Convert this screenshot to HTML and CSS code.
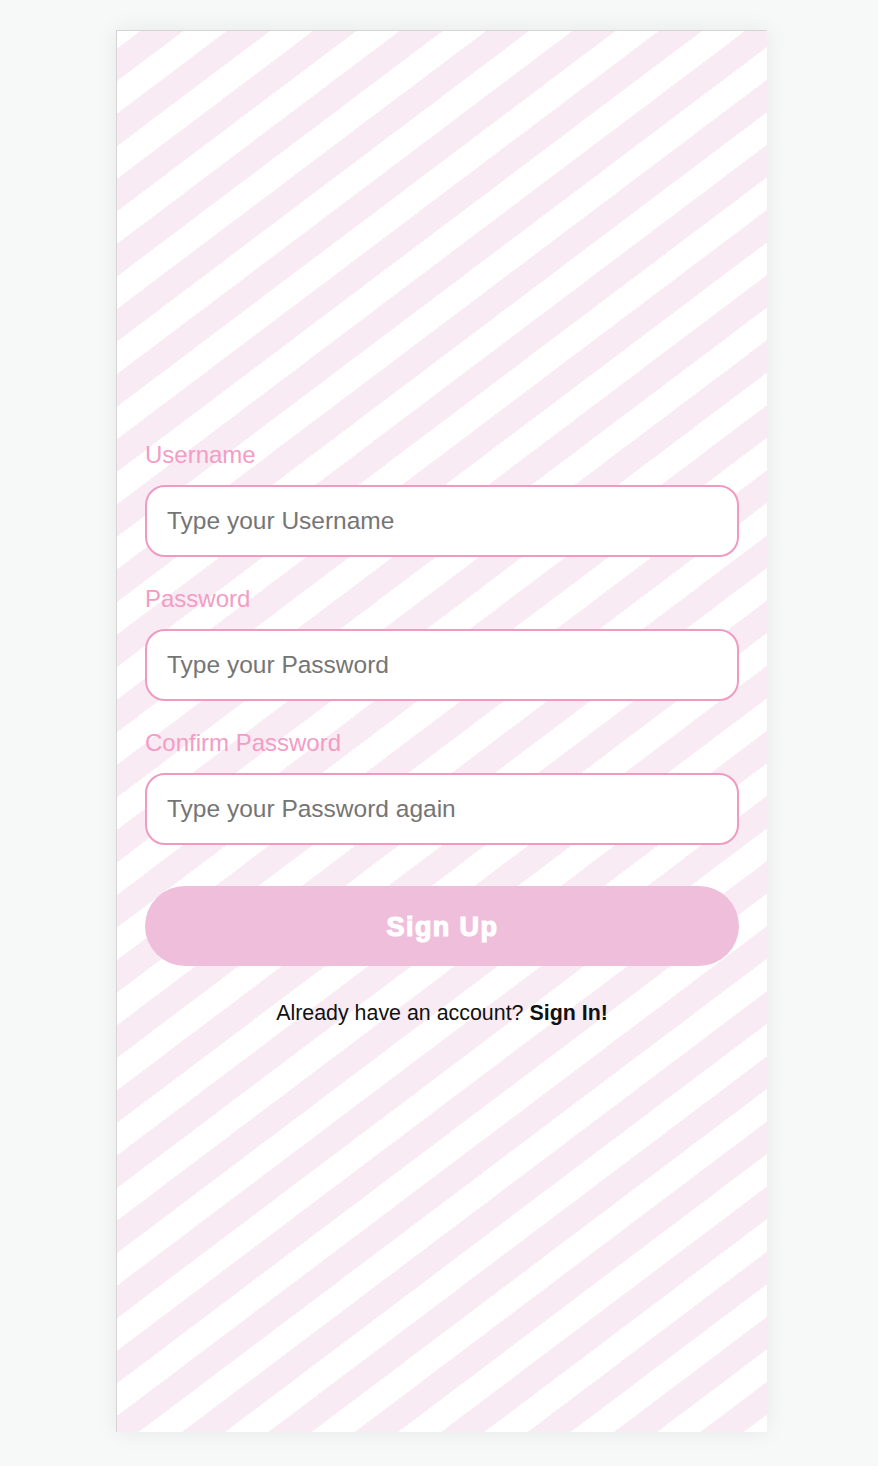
FILE: index.html
```html
<!DOCTYPE html>
<html lang="en">
<head>
<meta charset="utf-8">
<title>Sign Up</title>
<link rel="stylesheet" href="styles.css">
</head>
<body>
<div class="page">
  <div class="card">
    <form class="form">
      <label class="label" for="username">Username</label>
      <input class="field" id="username" type="text" placeholder="Type your Username">
      <label class="label" for="password">Password</label>
      <input class="field" id="password" type="password" placeholder="Type your Password">
      <label class="label" for="confirm">Confirm Password</label>
      <input class="field field-last" id="confirm" type="password" placeholder="Type your Password again">
      <button class="submit" type="button">Sign Up</button>
      <p class="footer">Already have an account? <a class="signin" href="#">Sign In!</a></p>
    </form>
  </div>
</div>
</body>
</html>
```

FILE: styles.css
```css
html, body {
  margin: 0;
  padding: 0;
  background: #f7f8f8;
}

.page {
  padding: 30px 0 34px 116px;
}

.card {
  box-sizing: border-box;
  width: 651px;
  height: 1402px;
  border-top: 1px solid #d4d4d4;
  border-left: 1px solid #d4d4d4;
  background-color: #ffffff;
  background-image: repeating-linear-gradient(143deg,
    #ffffff 0px, #ffffff 14px,
    #f8ebf4 14px, #f8ebf4 40px,
    #ffffff 40px, #ffffff 52px);
  box-shadow: 0 0 22px rgba(0, 0, 0, 0.07);
  display: flex;
  flex-direction: column;
  justify-content: center;
  padding: 2px 28px 0 28px;
}

.form {
  display: flex;
  flex-direction: column;
  font-family: "Liberation Sans", Arial, sans-serif;
}

.label {
  color: #f49cc5;
  font-size: 24px;
  line-height: 28px;
  margin-bottom: 16px;
}

.field {
  box-sizing: border-box;
  height: 72px;
  width: 100%;
  border: 2px solid #f09ac3;
  border-radius: 20px;
  background: #ffffff;
  padding: 0 20px;
  font-family: "Liberation Sans", Arial, sans-serif;
  font-size: 24.5px;
  color: #333;
  margin: 0 0 28px 0;
  outline: none;
}

.field::placeholder {
  color: #757575;
  opacity: 1;
}

.field-last {
  margin-bottom: 41px;
}

.submit {
  height: 80px;
  width: 100%;
  border: none;
  border-radius: 40px;
  background: #efbedb;
  color: #ffffff;
  font-family: "Liberation Sans", Arial, sans-serif;
  font-weight: bold;
  font-size: 27px;
  letter-spacing: 1.4px;
  -webkit-text-stroke: 1.2px #ffffff;
  padding: 3px 0 0 1px;
  cursor: pointer;
}

.footer {
  margin: 35px 0 0 0;
  text-align: center;
  font-size: 21.4px;
  line-height: 24px;
  color: #111111;
}

.signin {
  color: #111111;
  font-weight: bold;
  text-decoration: none;
}
```
